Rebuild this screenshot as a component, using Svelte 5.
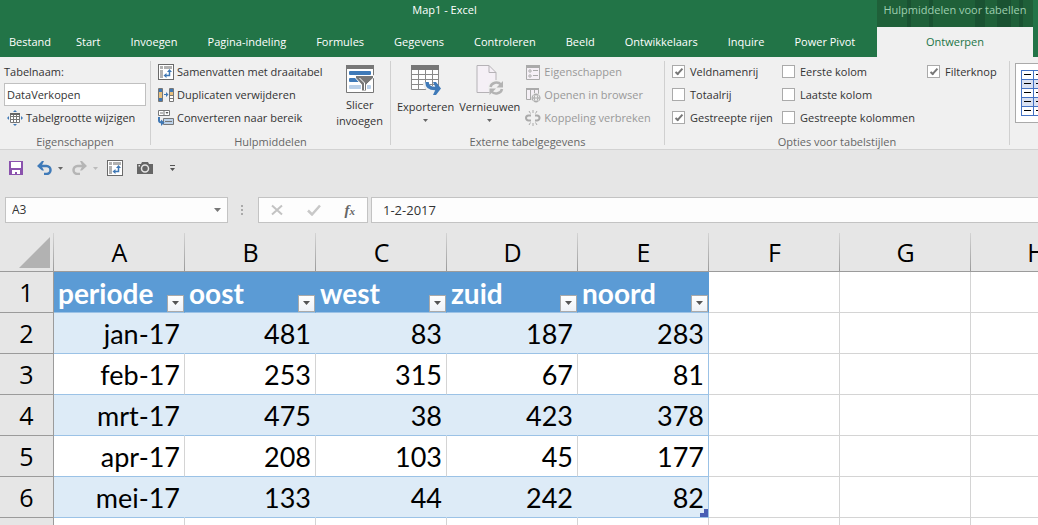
<script lang="ts">
  const tabs = [
    'Bestand', 'Start', 'Invoegen', 'Pagina-indeling', 'Formules', 'Gegevens',
    'Controleren', 'Beeld', 'Ontwikkelaars', 'Inquire', 'Power Pivot'
  ];

  const columns = ['A', 'B', 'C', 'D', 'E', 'F', 'G', 'H'];
  const fields = ['periode', 'oost', 'west', 'zuid', 'noord'];
  const rows = [
    ['jan-17', 481, 83, 187, 283],
    ['feb-17', 253, 315, 67, 81],
    ['mrt-17', 475, 38, 423, 378],
    ['apr-17', 208, 103, 45, 177],
    ['mei-17', 133, 44, 242, 82]
  ];
  const spare = columns.slice(fields.length);

  let tableName = $state('DataVerkopen');
  let cellRef = $state('A3');
  let formula = $state('1-2-2017');

  let options = $state([
    { label: 'Veldnamenrij', on: true },
    { label: 'Eerste kolom', on: false },
    { label: 'Filterknop', on: true },
    { label: 'Totaalrij', on: false },
    { label: 'Laatste kolom', on: false },
    null,
    { label: 'Gestreepte rijen', on: true },
    { label: 'Gestreepte kolommen', on: false }
  ]);
</script>

{#snippet pivotIcon()}
  <svg width="16" height="16" viewBox="0 0 16 16">
    <rect x=".5" y=".5" width="15" height="15" fill="#fff" stroke="#6a6a6a" />
    <path d="M2 2h3v3H2zM6 2h8v3H6zM2 6h3v8H2z" fill="#b1b1b1" />
    <path d="M7 11.5h4.500V7" fill="none" stroke="#3f78b5" stroke-width="1.500" />
    <path d="M9 8l2.500-3L14 8zM8.500 9v5L5.500 11.500z" fill="#3f78b5" />
  </svg>
{/snippet}

{#snippet caret(color: string)}
  <svg width="5" height="3" viewBox="0 0 5 3"><path d="M0 0h5L2.500 3z" fill={color} /></svg>
{/snippet}

{#snippet wideCaret(color: string)}
  <svg width="7" height="4" viewBox="0 0 7 4"><path d="M0 0h7L3.500 4z" fill={color} /></svg>
{/snippet}

<div class="window">
  <header class="titlebar">
    <div class="main">
      <h1>Map1 - Excel</h1>
      <nav>
        {#each tabs as tab}
          <button>{tab}</button>
        {/each}
      </nav>
    </div>
    <div class="context">
      <span>Hulpmiddelen voor tabellen</span>
      <button>Ontwerpen</button>
    </div>
  </header>

  <div class="ribbon">
    <section class="group properties">
      <div class="body stack">
        <label for="table-name">Tabelnaam:</label>
        <input id="table-name" bind:value={tableName} />
        <button class="small">
          <svg width="16" height="16" viewBox="0 0 16 16">
            <path d="M3.500 3.500h9v9h-9zM3.500 6.500h9M3.500 9.500h9M6.500 4v8.500M9.500 4v8.500" fill="#fff" stroke="#777" />
            <path d="M3 3h10v2H3z" fill="#666" />
            <path d="M6 2l2-2 2 2zM6 14l2 2 2-2zM2 6L0 8l2 2zM14 6l2 2-2 2z" fill="#3f78b5" />
          </svg>
          Tabelgrootte wijzigen
        </button>
      </div>
      <h2>Eigenschappen</h2>
    </section>
    <div class="divider"></div>

    <section class="group tools">
      <div class="body">
        <div class="stack">
          <button class="small">{@render pivotIcon()}Samenvatten met draaitabel</button>
          <button class="small">
            <svg width="16" height="16" viewBox="0 0 16 16">
              <path d="M.5 1.500h4v13h-4z" fill="#e8c07d" stroke="#777" />
              <path d="M1 2h3v3H1zM1 11h3v3H1z" fill="#3f78b5" />
              <path d="M11.500 1.500h4v13h-4zM11.500 8.500h4M11.500 11.500h4" fill="#fff" stroke="#777" />
              <path d="M12 2h3v3h-3z" fill="#3f78b5" />
              <path d="M12 5h3v3h-3z" fill="#e8c07d" />
              <path d="M6 7h2V5l2.500 2.500L8 10V8H6z" fill="#3f78b5" />
            </svg>
            Duplicaten verwijderen
          </button>
          <button class="small">
            <svg width="16" height="16" viewBox="0 0 16 16">
              <path d="M.5.500h11v5H.5zM6 .5v5" fill="#fff" stroke="#777" />
              <path d="M2 3h3" stroke="#777" />
              <path d="M7.500 2h3L9 4z" fill="#555" />
              <path d="M5.500 8.500h10v6h-10z" fill="#bcd2ea" stroke="#777" />
              <path d="M7 11.500h7" stroke="#777" />
              <path d="M1 7v3.500q0 2 3 2" fill="none" stroke="#3f78b5" stroke-width="2" />
              <path d="M3 9.500l3.500 3L3 16z" fill="#3f78b5" />
            </svg>
            Converteren naar bereik
          </button>
        </div>
        <button class="big">
          <svg width="28" height="28" viewBox="0 0 28 28">
            <path d="M.5.500h27v27H.5z" fill="#fff" stroke="#777" />
            <path d="M0 0h28v4H0z" fill="#777" />
            <rect x="3" y="6" width="22" height="4" rx="1" fill="#3f7ab8" />
            <rect x="3" y="13" width="12" height="4" rx="1" fill="#3f7ab8" />
            <rect x="3" y="20" width="22" height="4" rx="1" fill="#b8cfe8" />
            <path d="M9.500 10.500h18v2.500l-7 6.500v6.500h-5v-6.500L9.500 13z" fill="#777" stroke="#fff" />
            <path d="M13.500 13l5 5v7" fill="none" stroke="#fff" />
          </svg>
          <span>Slicer<br />invoegen</span>
        </button>
      </div>
      <h2>Hulpmiddelen</h2>
    </section>
    <div class="divider"></div>

    <section class="group external">
      <div class="body">
        <button class="big">
          <svg width="30" height="30" viewBox="0 0 30 30">
            <path d="M.5.500h27v24H.5z" fill="#fff" />
            <path d="M.5 4v20.500h27V4M0 9.500h28M0 14.500h28M0 19.500h28M7.500 4v20M14.500 4v20M21.500 4v20" fill="none" stroke="#8a8a8a" />
            <path d="M0 0h28v5H0z" fill="#777" />
            <path d="M15 17v2q1 5 8 5h4" fill="none" stroke="#f0f0f0" stroke-width="6" />
            <path d="M16 17q0 6.500 8 6.500h3" fill="none" stroke="#3f7ab8" stroke-width="3.500" />
            <path d="M22 17h3l5 6.500-5 6.500h-3l3-6.500z" fill="#3f7ab8" />
          </svg>
          <span>Exporteren</span>
          {@render caret('#666')}
        </button>
        <button class="big">
          <svg width="28" height="30" viewBox="0 0 28 30">
            <path d="M1 .5h12l7 7v20H1z" fill="#f5f0f6" stroke="#b5b2b6" />
            <path d="M13 .5v7h7" fill="none" stroke="#b5b2b6" />
            <circle cx="20" cy="23" r="8" fill="#f0f0f0" />
            <path d="M14.500 22a6 5.500 0 0 1 10.500-2.500M26 24a6 5.500 0 0 1-10.500 2.500" fill="none" stroke="#b3b3b3" stroke-width="2.500" />
            <path d="M27 16v6.500h-6.500zM13.500 30v-6.500H20z" fill="#b3b3b3" />
          </svg>
          <span>Vernieuwen</span>
          {@render caret('#666')}
        </button>
        <div class="stack">
          <button class="small" disabled>
            <svg width="16" height="16" viewBox="0 0 16 16">
              <path d="M1.500 1.500h13v14h-13z" fill="#f5f0f6" stroke="#aaa" />
              <path d="M1 1h14v3H1zM8 6h5v1H8zM8 11h5v1H8z" fill="#aaa" />
              <circle cx="5" cy="7" r="1.200" fill="none" stroke="#aaa" />
              <circle cx="5" cy="12" r="1.200" fill="none" stroke="#aaa" />
            </svg>
            Eigenschappen
          </button>
          <button class="small" disabled>
            <svg width="16" height="16" viewBox="0 0 16 16">
              <path d="M1.500 1.500h12v11h-12zM5.500 3v9M9.500 3v9" fill="#f5f0f6" stroke="#aaa" />
              <path d="M1 1h13v2H1z" fill="#aaa" />
              <circle cx="11" cy="11" r="5" fill="#f0f0f0" />
              <path d="M11 7a4 4 0 1 0 .1 0zM7 11h8M11 7q-4 4 0 8q4-4 0-8" fill="none" stroke="#aaa" />
            </svg>
            Openen in browser
          </button>
          <button class="small" disabled>
            <svg width="16" height="16" viewBox="0 0 16 16">
              <path d="M6 5.500H3.500a2.500 2.500 0 0 0 0 5H6M10 5.500h2a2.500 2.500 0 0 1 0 5h-2" fill="none" stroke="#aaa" stroke-width="2" />
              <path d="M8 0v3M4 1l1.500 2.500M12 1l-1.500 2.500M8 13v3M4 15l1.500-2.500M12 15l-1.500-2.500" stroke="#aaa" />
            </svg>
            Koppeling verbreken
          </button>
        </div>
      </div>
      <h2>Externe tabelgegevens</h2>
    </section>
    <div class="divider"></div>

    <section class="group options">
      <div class="body checks">
        {#each options as option}
          {#if option}
            <label><input type="checkbox" bind:checked={option.on} />{option.label}</label>
          {:else}
            <span></span>
          {/if}
        {/each}
      </div>
      <h2>Opties voor tabelstijlen</h2>
    </section>
    <div class="divider"></div>

    <button class="gallery" aria-label="Tabelstijlen">
      <svg width="61" height="46" viewBox="0 0 61 46">
        <path d="M0 0h61v46H0z" fill="#fff" />
        <path d="M0 9h61v9H0zM0 27h61v9H0z" fill="#d9e1f2" />
        <path d="M0 .5h61M0 9.500h61M0 18.500h61M0 27.500h61M0 36.500h61M0 45.500h61M.5 0v46M12.500 0v46M24.500 0v46M36.500 0v46M48.500 0v46M60.500 0v46" stroke="#4472c4" />
        <path d="M3 4.500h58M3 13.500h58M3 22.500h58M3 31.500h58M3 40.500h58" stroke="#000" stroke-dasharray="7 5" />
      </svg>
    </button>
  </div>

  <div class="quick">
    <button aria-label="Opslaan">
      <svg width="14" height="14" viewBox="0 0 14 14">
        <path d="M0 0h14v14H0z" fill="#8a52ad" />
        <path d="M2 1h10v6H2zM3 9h8v4H8v-2H6v2H3z" fill="#fff" />
      </svg>
    </button>
    <button class="split" aria-label="Ongedaan maken">
      <svg width="15" height="14" viewBox="0 0 15 14">
        <path d="M2 5h7.500a4 4 0 0 1 0 8H7" fill="none" stroke="#3f7ab8" stroke-width="2.500" />
        <path d="M0 5l5-5h2L4.500 5 7 9.500H5z" fill="#3f7ab8" />
      </svg>
      {@render caret('#666')}
    </button>
    <button class="split" aria-label="Opnieuw">
      <svg width="15" height="14" viewBox="0 0 15 14">
        <path d="M13 5H5.500a4 4 0 0 0 0 8H8" fill="none" stroke="#b5b5b5" stroke-width="2.500" />
        <path d="M15 5l-5-5H8l2.500 5L8 9.500h2z" fill="#b5b5b5" />
      </svg>
      {@render caret('#bbb')}
    </button>
    <button class="pivot" aria-label="Draaitabel">{@render pivotIcon()}</button>
    <button aria-label="Camera">
      <svg width="16" height="12" viewBox="0 0 16 12">
        <path d="M0 2h4l1-2h6l1 2h4v10H0z" fill="#666" />
        <circle cx="8" cy="6.500" r="3.500" fill="none" stroke="#e6e6e6" stroke-width="1.500" />
        <path d="M1.500 3h1.500v1.500H1.500z" fill="#e6e6e6" />
      </svg>
    </button>
    <button class="more" aria-label="Werkbalk aanpassen">
      <svg width="5" height="6" viewBox="0 0 5 6"><path d="M0 0h5v1H0zM0 3h5L2.500 6z" fill="#555" /></svg>
    </button>
  </div>

  <div class="formula-bar">
    <div class="name-box">
      <input aria-label="Naamvak" bind:value={cellRef} />
      <button aria-label="Namen">{@render wideCaret('#777')}</button>
    </div>
    <svg class="grip" width="2" height="10" viewBox="0 0 2 10"><path d="M0 0h2v2H0zM0 4h2v2H0zM0 8h2v2H0z" fill="#aaa" /></svg>
    <div class="actions">
      <button aria-label="Annuleren">
        <svg width="12" height="12" viewBox="0 0 12 12"><path d="M1 1.500l10 9M11 1.500l-10 9" stroke="#c3c3c3" stroke-width="2" /></svg>
      </button>
      <button aria-label="Invoeren">
        <svg width="14" height="12" viewBox="0 0 14 12"><path d="M1 6.500l4 4L13 1.500" fill="none" stroke="#c8c8c8" stroke-width="2.500" /></svg>
      </button>
      <button class="fx" aria-label="Functie invoegen">f<small>x</small></button>
    </div>
    <input class="formula" aria-label="Formulebalk" bind:value={formula} />
  </div>

  <div class="sheet">
    <table>
      <thead>
        <tr>
          <th class="corner">
            <button aria-label="Alles selecteren">
              <svg width="31" height="31" viewBox="0 0 31 31"><path d="M31 0v31H0z" fill="#b2b2b2" /></svg>
            </button>
          </th>
          {#each columns as column}
            <th scope="col">{column}</th>
          {/each}
        </tr>
      </thead>
      <tbody>
        <tr>
          <th scope="row">1</th>
          {#each fields as field}
            <td class="field">
              <div>
                {field}
                <button aria-label="Filter {field}">{@render wideCaret('#555')}</button>
              </div>
            </td>
          {/each}
          {#each spare as _}<td></td>{/each}
        </tr>
        {#each rows as row, r}
          <tr class:band={r % 2 === 0}>
            <th scope="row">{r + 2}</th>
            {#each row as value, c}
              <td class="data">
                {value}
                {#if r === rows.length - 1 && c === row.length - 1}
                  <svg class="handle" width="8" height="8" viewBox="0 0 8 8"><path d="M4 0h4v8H0V4h4z" fill="#4a5fb4" /></svg>
                {/if}
              </td>
            {/each}
            {#each spare as _}<td></td>{/each}
          </tr>
        {/each}
        <tr>
          <th scope="row"></th>
          {#each columns as _}<td></td>{/each}
        </tr>
      </tbody>
    </table>
  </div>
</div>

<style>
  :global(body) {
    margin: 0;
  }

  .window {
    display: flex;
    flex-direction: column;
    height: 100vh;
    overflow: hidden;
    background: #e6e6e6;
    color: #333;
    font: 11px/16px 'Open Sans', 'Noto Sans', sans-serif;
  }

  button,
  input {
    box-sizing: border-box;
    margin: 0;
    padding: 0;
    border: 0;
    background: none;
    color: inherit;
    font: inherit;
  }

  button {
    display: flex;
    align-items: center;
    white-space: nowrap;
  }

  svg {
    display: block;
    flex: none;
  }

  h1,
  h2 {
    margin: 0;
    font: inherit;
    text-align: center;
  }

  .titlebar {
    display: flex;
    flex: none;
    height: 57px;
    padding-right: 5px;
    background: #227447;
    color: #fff;
  }

  .main {
    flex: 1;
    min-width: 0;
  }

  h1 {
    height: 27px;
    padding-left: 12px;
    line-height: 20px;
  }

  nav {
    display: flex;
    height: 30px;
  }

  nav button {
    padding: 0 15px;
  }

  nav button:first-child {
    padding: 0 10px 0 9px;
  }

  .context {
    flex: none;
    width: 156px;
    background: linear-gradient(90deg, transparent 30px, #1a5232 30px 34px, transparent 34px 52px, #1a5232 52px 56px, transparent 56px 98px, #1a5232 98px 108px, transparent 108px 120px, #1a5232 120px 134px, transparent 134px 142px, #1a5232 142px 146px, transparent 146px) #1f6039;
  }

  .context span {
    display: block;
    height: 27px;
    line-height: 20px;
    text-align: center;
    white-space: nowrap;
    color: #9ecfb0;
  }

  .context button {
    justify-content: center;
    width: 100%;
    height: 30px;
    background: #f0f0f0;
    color: #227447;
  }

  .ribbon {
    display: flex;
    flex: none;
    height: 92px;
    overflow: hidden;
    border-bottom: 1px solid #d2d2d2;
    background: #f0f0f0;
  }

  .divider {
    flex: none;
    width: 1px;
    margin: 4px 0;
    background: #d0d0d0;
  }

  .group {
    display: flex;
    flex: none;
    flex-direction: column;
    gap: 5px;
    box-sizing: border-box;
    padding-top: 3px;
  }

  .group h2 {
    color: #666;
  }

  .body {
    display: flex;
    height: 69px;
  }

  .stack {
    display: flex;
    flex-direction: column;
  }

  .stack > * {
    height: 23px;
    line-height: 23px;
  }

  .properties {
    width: 150px;
    padding-left: 4px;
    padding-right: 4px;
  }

  .properties input {
    padding: 0 2px;
    border: 1px solid #c0c0c0;
    background: #fff;
  }

  .properties .small {
    padding-left: 3px;
  }

  .small {
    gap: 3px;
  }

  .small:disabled {
    color: #999;
  }

  .big {
    flex-direction: column;
    gap: 4px;
    padding-top: 5px;
    line-height: 16px;
  }

  .tools {
    width: 239px;
  }

  .tools .body {
    justify-content: space-between;
    padding: 0 7px;
  }

  .external {
    width: 273px;
  }

  .external .body {
    gap: 5px;
    padding-left: 6px;
  }

  .options {
    width: 344px;
  }

  .checks {
    display: grid;
    grid-template-columns: 110px 145px 1fr;
    grid-auto-rows: 23px;
    padding-left: 7px;
  }

  .checks label {
    display: flex;
    align-items: center;
    gap: 5px;
    white-space: nowrap;
  }

  .checks input {
    appearance: none;
    display: flex;
    align-items: center;
    justify-content: center;
    width: 13px;
    height: 13px;
    border: 1px solid #aaa;
    background: #fff;
  }

  .checks input:checked::before {
    content: '';
    width: 8px;
    height: 4px;
    box-sizing: border-box;
    border: solid #777;
    border-width: 0 0 2px 2px;
    transform: translateY(-1px) rotate(-48deg);
  }

  .gallery {
    flex: none;
    height: 60px;
    margin: 6px 0 0 5px;
    padding: 0 5px;
    border: 1px solid #aaa;
    background: #fff;
  }

  .quick {
    display: flex;
    flex: none;
    align-items: center;
    gap: 14px;
    height: 36px;
    margin-bottom: 11px;
    padding-left: 9px;
  }

  .split {
    gap: 6px;
  }

  .split + .split,
  .quick .pivot {
    margin-left: -5px;
  }

  .more {
    margin-left: 3px;
  }

  .formula-bar {
    display: flex;
    flex: none;
    align-items: center;
    height: 26px;
    padding-left: 5px;
    font-size: 12px;
  }

  .name-box,
  .actions,
  .formula {
    display: flex;
    box-sizing: border-box;
    height: 26px;
    border: 1px solid #c3c3c3;
    background: #fdfdfd;
  }

  .name-box {
    width: 223px;
    padding: 0 6px;
  }

  .name-box input {
    flex: 1;
    min-width: 0;
  }

  .grip {
    margin: 0 15px 0 13px;
  }

  .actions {
    align-items: center;
    justify-content: space-between;
    width: 110px;
    margin-right: 3px;
    padding: 0 12px;
  }

  .fx {
    align-items: baseline;
    color: #666;
    font: italic bold 15px/18px 'Liberation Serif', serif;
  }

  .fx small {
    font-size: 11px;
  }

  .formula {
    flex: 1;
    min-width: 0;
    border-right: 0;
    padding-left: 11px;
    font-size: 13px;
  }

  .sheet {
    flex: 1;
    min-height: 0;
    margin-top: 10px;
    overflow: hidden;
    color: #000;
    font: 27px/32px Lato, 'Open Sans', sans-serif;
  }

  table {
    table-layout: fixed;
    width: 1102px;
    border-spacing: 0;
  }

  th,
  td {
    box-sizing: border-box;
    height: 41px;
    padding: 0;
    border-right: 1px solid #d4d4d4;
    border-bottom: 1px solid #d4d4d4;
    background: #fff;
  }

  th {
    border-color: #9b9b9b;
    background: #e6e6e6;
    font-family: 'Open Sans', sans-serif;
    font-size: 25px;
    font-weight: normal;
  }

  thead th {
    height: 39px;
    border-right: 0;
    background: linear-gradient(#d4d4d4, #9b9b9b) right / 1px 100% no-repeat #e6e6e6;
  }

  .corner {
    width: 54px;
  }

  .corner button {
    margin-left: auto;
    padding-right: 4px;
  }

  .field,
  .data {
    border-bottom-color: #9bc2e6;
  }

  .field {
    border-right-color: #5b9bd5;
    background: #5b9bd5;
    color: #fff;
    font-size: 28px;
    font-weight: bold;
  }

  .field div {
    display: flex;
    align-items: flex-end;
    justify-content: space-between;
    height: 39px;
    padding-left: 4px;
    line-height: 38px;
  }

  .field button {
    justify-content: center;
    width: 17px;
    height: 17px;
    border: 1px solid #aaa;
    background: linear-gradient(#fff, #eef2f7);
  }

  .data {
    position: relative;
    padding-top: 2px;
    padding-right: 4px;
    text-align: right;
  }

  .band .data {
    border-right-color: #ddebf7;
    background: #ddebf7;
  }

  .data:nth-child(6),
  .band .data:nth-child(6) {
    border-right-color: #9bc2e6;
  }

  .handle {
    position: absolute;
    right: 0;
    bottom: 0;
  }
</style>
